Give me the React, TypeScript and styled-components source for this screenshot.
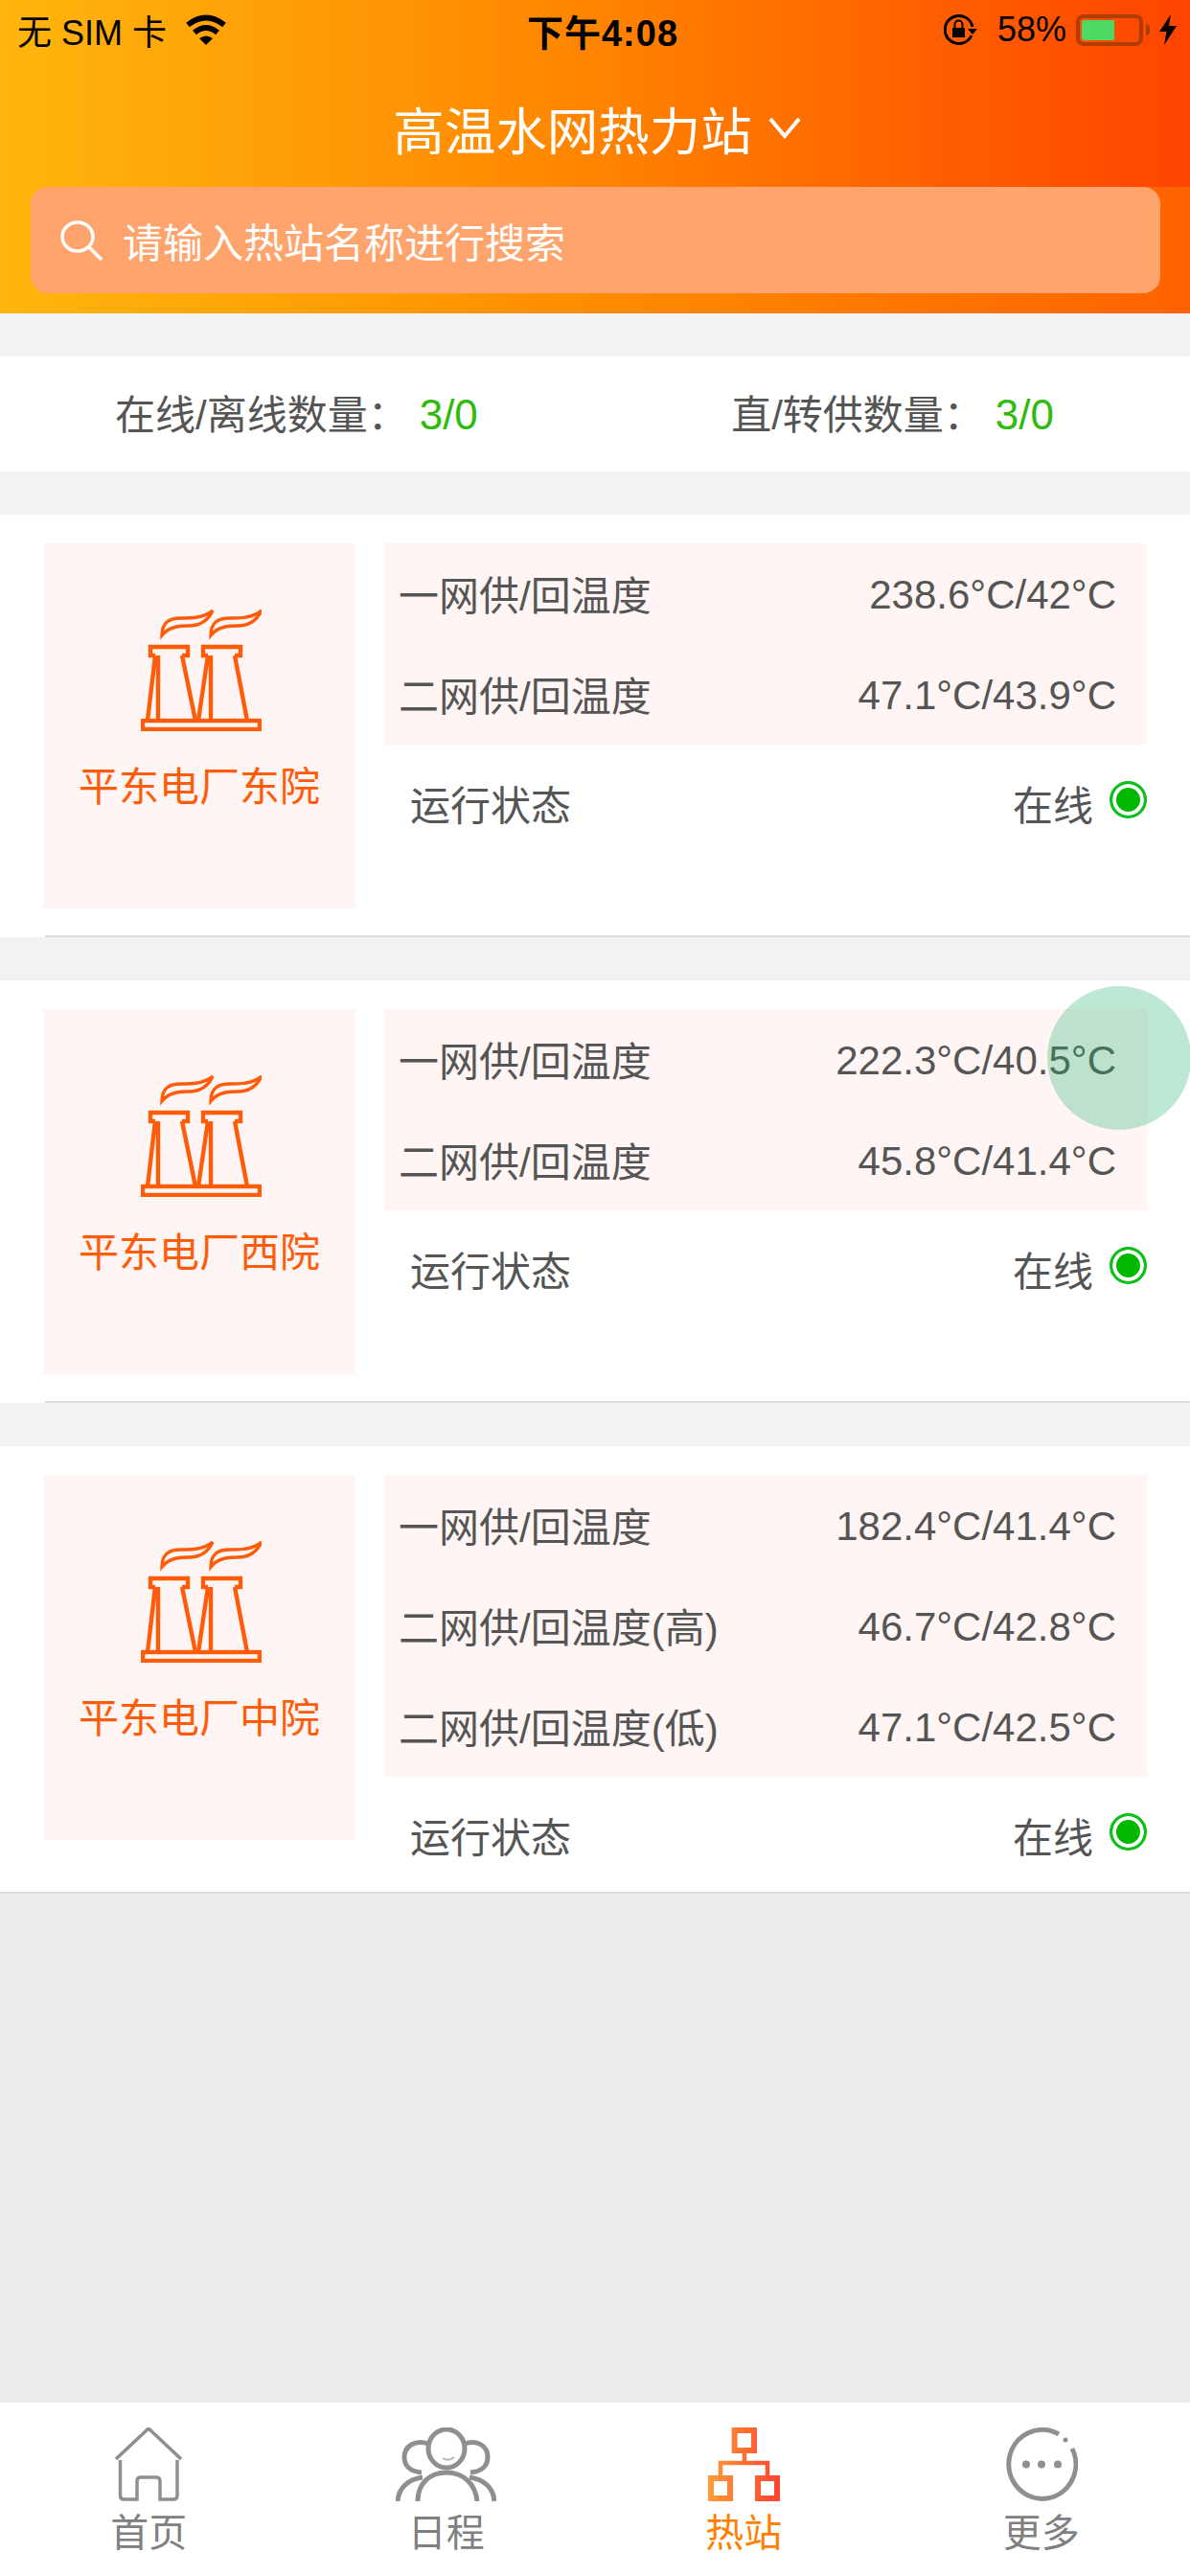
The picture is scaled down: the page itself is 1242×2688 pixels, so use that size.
import React from "react";
import styled, { createGlobalStyle } from "styled-components";

const GlobalStyle = createGlobalStyle`
  html, body {
    margin: 0;
    padding: 0;
    background: #ebecee;
    font-family: "Liberation Sans", "Noto Sans CJK SC", sans-serif;
  }
  * {
    box-sizing: border-box;
  }
`;

const Page = styled.div`
  position: relative;
  width: 1242px;
  height: 2688px;
  overflow: hidden;
  display: flex;
  flex-direction: column;
  background: #ebecee;
`;

const NavArea = styled.div`
  height: 195px;
  background: linear-gradient(90deg, #ffb60d 0%, #ff8400 50%, #ff4400 100%);
  display: flex;
  flex-direction: column;
`;

const StatusBar = styled.div`
  height: 64px;
  padding: 0 14px 2px 18px;
  display: grid;
  grid-template-columns: 1fr auto 1fr;
  align-items: center;
  color: #000;
  font-size: 36px;
`;

const StatusLeft = styled.div`
  display: flex;
  align-items: center;
  gap: 19px;
`;

const StatusRight = styled.div`
  display: flex;
  align-items: center;
  justify-content: flex-end;
`;

const Clock = styled.div`
  padding-left: 12px;
  font-weight: 700;
  font-size: 38px;
  letter-spacing: 1px;
`;

const Percent = styled.span`
  margin: 0 10px 0 20px;
`;

const Battery = styled.div`
  position: relative;
  width: 70px;
  height: 33px;
  padding: 2px;
  border: 4px solid #b03c00;
  border-radius: 8px;
  margin-right: 3px;
`;

const BatteryLevel = styled.div`
  height: 100%;
  width: 58%;
  background: #4cd964;
  border-radius: 3px 0 0 3px;
`;

const BatteryTip = styled.div`
  width: 4px;
  height: 12px;
  background: #b03c00;
  border-radius: 0 4px 4px 0;
  margin-right: 10px;
`;

const TitleRow = styled.div`
  flex: 1;
  padding: 7px 0 0 4px;
  display: flex;
  align-items: center;
  justify-content: center;
  gap: 17px;
  color: #fff;
  font-size: 53.5px;
`;

const SearchArea = styled.div`
  height: 132px;
  padding: 0 31px 21px 32px;
  background: linear-gradient(90deg, #ffb60d 0%, #ff8c00 50%, #ff6200 100%);
`;

const SearchBox = styled.div`
  height: 111px;
  padding-left: 31px;
  display: flex;
  align-items: center;
  gap: 21px;
  background: #ffa46c;
  border-radius: 18px;
  color: #fff;
  font-size: 42px;
`;

const List = styled.div`
  padding-top: 45px;
  display: flex;
  flex-direction: column;
  gap: 45px;
  background: #f2f2f2;
`;

const Summary = styled.div`
  height: 120px;
  padding: 0 142px 6px 120px;
  display: flex;
  align-items: center;
  justify-content: space-between;
  background: #fff;
  color: #555;
  font-size: 42px;
`;

const SummaryValue = styled.span`
  margin-left: 12px;
  color: #2fbb0e;
  font-size: 44px;
`;

const Card = styled.div`
  background: #fff;
`;

const CardBody = styled.div<{ $tail: number }>`
  display: flex;
  gap: 30px;
  padding: 30px 45px ${(p) => p.$tail}px;
`;

const Tile = styled.div`
  flex: 0 0 326px;
  height: 381px;
  padding-top: 68px;
  display: flex;
  flex-direction: column;
  align-items: center;
  background: #fff5f4;
  color: #ff5c0a;
  font-size: 42px;
`;

const PlantBox = styled.div`
  height: 128px;
  margin-left: 4px;
`;

const TileLabel = styled.div`
  margin-top: 29px;
  line-height: 60px;
`;

const Readings = styled.div`
  flex: 1;
  display: flex;
  flex-direction: column;
`;

const ReadingTable = styled.div`
  background: #fff5f4;
`;

const ReadingRow = styled.div`
  height: 105px;
  padding: 0 32px 0 15px;
  display: flex;
  align-items: center;
  justify-content: space-between;
  color: #555;
  font-size: 42px;
`;

const ReadingLabel = styled.span`
  padding-bottom: 3px;
`;

const ReadingValue = styled.span`
  padding-top: 2px;
`;

const StateRow = styled.div`
  height: 120px;
  padding-left: 27px;
  display: flex;
  align-items: center;
  color: #555;
  font-size: 42px;
`;

const StateText = styled.span`
  margin-left: auto;
`;

const StateDot = styled.span`
  width: 39px;
  height: 39px;
  margin: 0 0 6px 17px;
  border: 3px solid #0cc01c;
  border-radius: 50%;
  background: #00b800;
  box-shadow: inset 0 0 0 4px #fff;
`;

const Divider = styled.div<{ $inset: number }>`
  height: 2px;
  margin-left: ${(p) => p.$inset}px;
  background: #dcdcdc;
`;

const Spacer = styled.div`
  flex: 1;
`;

const TabBar = styled.div`
  height: 181px;
  padding-top: 26px;
  display: grid;
  grid-template-columns: repeat(4, 1fr);
  background: #fff;
`;

const Tab = styled.div<{ $active?: boolean }>`
  display: flex;
  flex-direction: column;
  align-items: center;
  color: ${(p) => (p.$active ? "#ff7f00" : "#808080")};
  font-size: 40px;
`;

const TabIcon = styled.div`
  height: 77px;
  display: flex;
  justify-content: center;
`;

const TabLabel = styled.div`
  margin-top: 4px;
  line-height: 58px;
`;

// touch indicator left over from the screen recording
const TouchDot = styled.div`
  position: absolute;
  left: 1093px;
  top: 1029px;
  width: 150px;
  height: 150px;
  border-radius: 50%;
  background: rgba(38, 180, 110, 0.3);
`;

const WifiIcon = () => (
  <svg width="44" height="32" viewBox="0 0 44 32">
    <g fill="none" stroke="#000" strokeWidth="6">
      <path d="M3 11 Q22 -4 41 11" />
      <path d="M10 19 Q22 9 34 19" />
    </g>
    <path d="M15 25 Q22 20 29 25 L22 32 Z" fill="#000" />
  </svg>
);

const RotationLockIcon = () => (
  <svg width="36" height="32" viewBox="0 0 36 32">
    <path d="M29 22 A14.5 14.5 0 1 1 30 13" fill="none" stroke="#000" strokeWidth="3" />
    <path d="M25 15 L35 15 L30 21 Z" fill="#000" />
    <rect x="9" y="14" width="13" height="10" fill="#000" />
    <path d="M11.5 14 V10.5 A4 4 0 0 1 19.5 10.5 V14" fill="none" stroke="#000" strokeWidth="2" />
  </svg>
);

const BoltIcon = () => (
  <svg width="18" height="32" viewBox="0 0 18 32">
    <path d="M12 0 L0 18 L7.5 18 L5 32 L18 12 L10 12 Z" fill="#000" />
  </svg>
);

const ChevronIcon = () => (
  <svg width="34" height="24" viewBox="0 0 34 24">
    <path d="M2 3 L17 21 L32 3" fill="none" stroke="#fff" strokeWidth="4" />
  </svg>
);

const SearchIcon = () => (
  <svg width="44" height="42" viewBox="0 0 44 42">
    <ellipse cx="18" cy="17" rx="16" ry="15" fill="none" stroke="#fff" strokeWidth="3.5" />
    <path d="M30 28 L43 41" stroke="#fff" strokeWidth="3.5" />
  </svg>
);

const FlamePath = "M22 28 C22 14 30 10 42 10 C52 10 66 10 75 2 C70 13 62 18 50 18 C42 18 30 18 22 28 Z";

const PlantIcon = () => (
  <svg width="126" height="128" viewBox="0 0 126 128">
    <g fill="none" stroke="#ff5c0a" strokeWidth="4.4">
      <path d={FlamePath} strokeWidth="3.4" />
      <path d={FlamePath} strokeWidth="3.4" transform="translate(51 0)" />
      <rect x="2" y="117" width="122" height="9" />
      <path d="M15 49 H10 V40 H49 V49 H43 M15 49 L7 117 M18 49 V117 M43 49 L57 117" />
      <path d="M70 49 H65 V40 H104 V49 H98 M70 49 L60 117 M73 49 V117 M98 49 L111 117" />
    </g>
  </svg>
);

const HomeIcon = () => (
  <svg width="70" height="77" viewBox="0 0 70 77">
    <path
      d="M1 33 L35 1 L69 33 M5.5 34 V71 Q5.5 75 9.5 75 H23 V56 Q23 52 27 52 H43 Q47 52 47 56 V75 H61 Q65 75 65 71 V34"
      fill="none"
      stroke="#8f8f8f"
      strokeWidth="3.5"
    />
  </svg>
);

const GroupIcon = () => (
  <svg width="105" height="77" viewBox="0 0 105 77">
    <g fill="none" stroke="#8f8f8f" strokeWidth="5">
      <ellipse cx="53" cy="22" rx="19" ry="20" />
      <path d="M34 17 C20 12 9 20 9 31 C9 40 15 46 27 47" />
      <path d="M72 17 C86 12 96 20 96 31 C96 40 90 46 78 47" />
      <path d="M23 77 C23 58 36 47 53 47 C70 47 83 58 85 77" />
      <path d="M2 77 C3 63 13 54 28 52" />
      <path d="M103 77 C102 63 92 54 77 52" />
    </g>
    <path d="M49 32 Q55 36 61 31" fill="none" stroke="#b5b5b5" strokeWidth="2" />
  </svg>
);

const StationTabIcon = () => (
  <svg width="75" height="77" viewBox="0 0 75 77">
    <defs>
      <linearGradient id="stationGrad" gradientUnits="userSpaceOnUse" x1="0" y1="0" x2="75" y2="0">
        <stop offset="0" stopColor="#ff9c35" />
        <stop offset="1" stopColor="#ff4232" />
      </linearGradient>
    </defs>
    <g fill="none" stroke="url(#stationGrad)" strokeWidth="6">
      <rect x="27.6" y="3" width="20.4" height="21" />
      <rect x="3" y="53" width="20" height="21" />
      <rect x="52" y="53" width="20" height="21" />
      <path d="M38 26 V37 M13 50 V37 H62 V50" strokeWidth="4.5" />
    </g>
  </svg>
);

const MoreIcon = () => (
  <svg width="76" height="77" viewBox="0 0 76 77">
    <path d="M70 22 A35 36 0 1 1 56 7" fill="none" stroke="#8f8f8f" strokeWidth="5" />
    <circle cx="63" cy="13" r="2.5" fill="#8f8f8f" />
    <circle cx="22" cy="38.5" r="4" fill="#8f8f8f" />
    <circle cx="38" cy="38.5" r="4" fill="#8f8f8f" />
    <circle cx="55" cy="38.5" r="4" fill="#8f8f8f" />
  </svg>
);

type Station = {
  name: string;
  readings: [string, string][];
  tail: number;
  inset: number;
};

const stations: Station[] = [
  {
    name: "平东电厂东院",
    readings: [
      ["一网供/回温度", "238.6°C/42°C"],
      ["二网供/回温度", "47.1°C/43.9°C"],
    ],
    tail: 28,
    inset: 47,
  },
  {
    name: "平东电厂西院",
    readings: [
      ["一网供/回温度", "222.3°C/40.5°C"],
      ["二网供/回温度", "45.8°C/41.4°C"],
    ],
    tail: 28,
    inset: 47,
  },
  {
    name: "平东电厂中院",
    readings: [
      ["一网供/回温度", "182.4°C/41.4°C"],
      ["二网供/回温度(高)", "46.7°C/42.8°C"],
      ["二网供/回温度(低)", "47.1°C/42.5°C"],
    ],
    tail: 0,
    inset: 0,
  },
];

const tabs = [
  { label: "首页", icon: <HomeIcon /> },
  { label: "日程", icon: <GroupIcon /> },
  { label: "热站", icon: <StationTabIcon />, active: true },
  { label: "更多", icon: <MoreIcon /> },
];

export default function App() {
  return (
    <Page>
      <GlobalStyle />
      <NavArea>
        <StatusBar>
          <StatusLeft>
            <span>无 SIM 卡</span>
            <WifiIcon />
          </StatusLeft>
          <Clock>下午4:08</Clock>
          <StatusRight>
            <RotationLockIcon />
            <Percent>58%</Percent>
            <Battery>
              <BatteryLevel />
            </Battery>
            <BatteryTip />
            <BoltIcon />
          </StatusRight>
        </StatusBar>
        <TitleRow>
          <span>高温水网热力站</span>
          <ChevronIcon />
        </TitleRow>
      </NavArea>
      <SearchArea>
        <SearchBox>
          <SearchIcon />
          <span>请输入热站名称进行搜索</span>
        </SearchBox>
      </SearchArea>
      <List>
        <Summary>
          <div>
            在线/离线数量：<SummaryValue>3/0</SummaryValue>
          </div>
          <div>
            直/转供数量：<SummaryValue>3/0</SummaryValue>
          </div>
        </Summary>
        {stations.map((station) => (
          <Card key={station.name}>
            <CardBody $tail={station.tail}>
              <Tile>
                <PlantBox>
                  <PlantIcon />
                </PlantBox>
                <TileLabel>{station.name}</TileLabel>
              </Tile>
              <Readings>
                <ReadingTable>
                  {station.readings.map(([label, value]) => (
                    <ReadingRow key={label}>
                      <ReadingLabel>{label}</ReadingLabel>
                      <ReadingValue>{value}</ReadingValue>
                    </ReadingRow>
                  ))}
                </ReadingTable>
                <StateRow>
                  <span>运行状态</span>
                  <StateText>在线</StateText>
                  <StateDot />
                </StateRow>
              </Readings>
            </CardBody>
            <Divider $inset={station.inset} />
          </Card>
        ))}
      </List>
      <Spacer />
      <TabBar>
        {tabs.map((tab) => (
          <Tab key={tab.label} $active={tab.active}>
            <TabIcon>{tab.icon}</TabIcon>
            <TabLabel>{tab.label}</TabLabel>
          </Tab>
        ))}
      </TabBar>
      <TouchDot />
    </Page>
  );
}
